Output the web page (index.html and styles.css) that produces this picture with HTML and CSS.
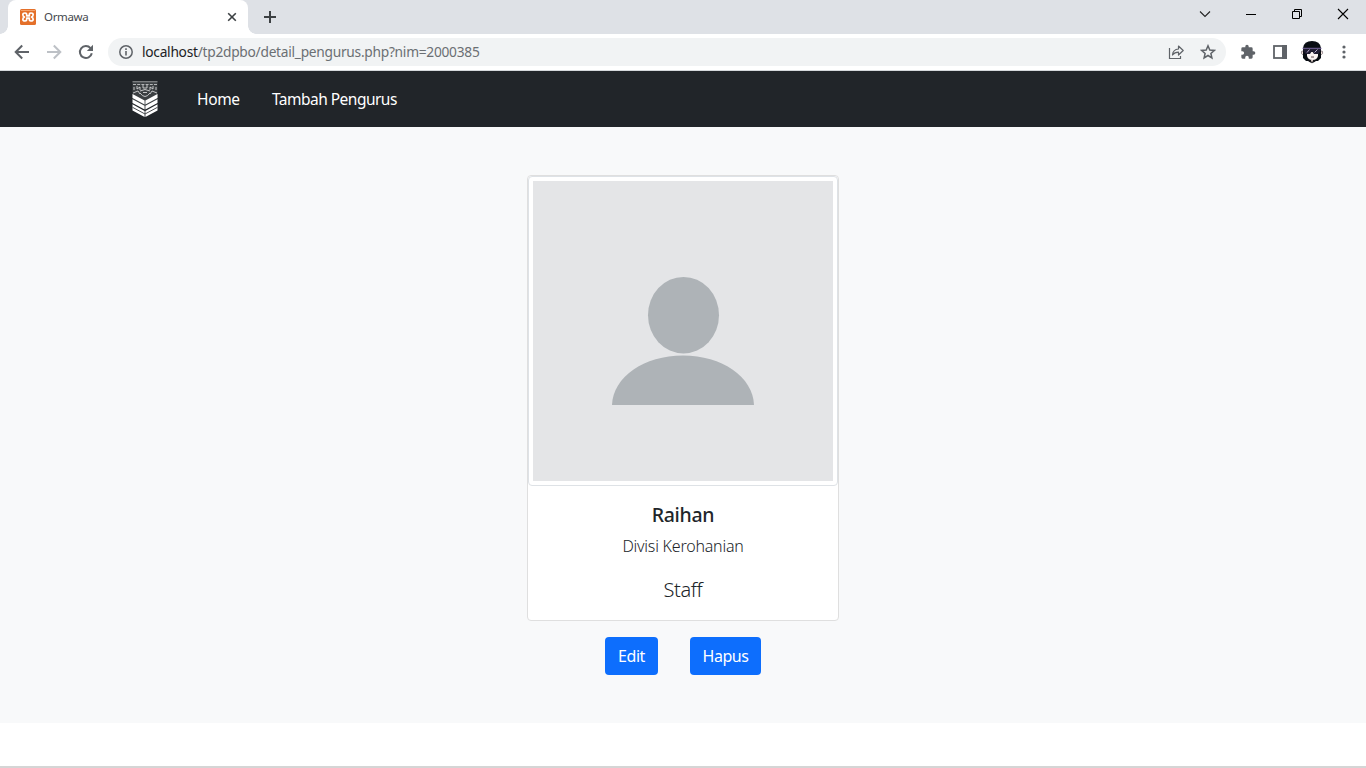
FILE: index.html
```
<!DOCTYPE html>
<html lang="id">
<head>
<meta charset="utf-8">
<title>Ormawa</title>
<link rel="stylesheet" href="styles.css">
</head>
<body>
<div class="window">
  <header class="tabstrip">
    <div class="tab">
      <svg class="favicon" width="16" height="16" viewBox="0 0 16 16"><rect width="16" height="16" rx="1.500" fill="#e4702a"/><path d="M1 1.500H15" stroke="#f5a36c"/><path d="M5 4C2.200 4 2.200 7 4.500 8C2.200 9 2.200 12 5 12C7 12 6.700 10 6.700 9.200H9.300C9.300 10 9 12 11 12C13.800 12 13.800 9 11.500 8C13.800 7 13.800 4 11 4C9 4 9.300 6 9.300 6.800H6.700C6.700 6 7 4 5 4Z" fill="none" stroke="#fff" stroke-width="1.700" stroke-linejoin="round"/></svg>
      <span class="tab-title">Ormawa</span>
      <svg class="tab-close" width="10" height="10" viewBox="0 0 10 10"><path d="M1.200 1.200L8.800 8.800M8.800 1.200L1.200 8.800" stroke="#3c4043" stroke-width="1.600"/></svg>
      <i class="tab-curve-left"></i><i class="tab-curve"></i>
    </div>
    <svg class="new-tab" width="14" height="14" viewBox="0 0 14 14"><path d="M7 1V13M1 7H13" stroke="#3c4043" stroke-width="2"/></svg>
    <div class="window-controls">
      <svg width="12" height="12" viewBox="0 0 12 12"><path d="M1 3.500L6 8.500L11 3.500" fill="none" stroke="#222" stroke-width="1.100"/></svg>
      <svg width="12" height="12" viewBox="0 0 12 12"><path d="M1 6.500H11" stroke="#000"/></svg>
      <svg width="12" height="12" viewBox="0 0 12 12"><path d="M1.500 3.500H8.500V10.500H1.500ZM3.500 3.500V1.500H10.500V8.500H8.500" fill="none" stroke="#000"/></svg>
      <svg width="12" height="12" viewBox="0 0 12 12"><path d="M1 1L11 11M11 1L1 11" stroke="#000" stroke-width="1.100"/></svg>
    </div>
  </header>

  <div class="toolbar">
    <div class="nav-buttons">
      <svg width="16" height="16" viewBox="0 0 16 16"><path d="M15 8H2M8.200 1.500L1.700 8L8.200 14.500" fill="none" stroke="#5f6368" stroke-width="2"/></svg>
      <svg width="16" height="16" viewBox="0 0 16 16"><path d="M1 8H14M7.800 1.500L14.300 8L7.800 14.500" fill="none" stroke="#bdc1c6" stroke-width="2"/></svg>
      <svg width="16" height="16" viewBox="0 0 16 16"><path d="M13.800 9.300A6 6 0 1 1 12.500 4.100" fill="none" stroke="#5f6368" stroke-width="2"/><path d="M15 .8V7H8.800Z" fill="#5f6368"/></svg>
    </div>
    <div class="address">
      <svg width="14" height="14" viewBox="0 0 14 14"><circle cx="7" cy="7" r="6.200" fill="none" stroke="#5f6368" stroke-width="1.500"/><path d="M7 6V10.600M7 3.300V4.900" stroke="#5f6368" stroke-width="1.600"/></svg>
      <span class="url"><b>localhost</b>/tp2dpbo/detail_pengurus.php?nim=2000385</span>
      <svg class="share" width="16" height="16" viewBox="0 0 16 16"><path d="M1.500 4V14.500H12.500V12" fill="none" stroke="#5f6368" stroke-width="1.200"/><path d="M4.500 11C4.800 7.300 6.800 5.300 10.500 5V2L15.200 6.500L10.500 11V8.200C7.500 8.200 6 9 4.500 11Z" fill="none" stroke="#5f6368" stroke-width="1.200" stroke-linejoin="round"/></svg>
      <svg class="star" width="16" height="16" viewBox="0 0 16 16"><path d="M8 1.800L9.800 6L14.300 6.400L10.900 9.400L11.900 13.900L8 11.500L4.100 13.900L5.100 9.400L1.700 6.400L6.200 6Z" fill="none" stroke="#5f6368" stroke-width="1.500"/></svg>
    </div>
    <div class="extensions">
      <svg width="16" height="16" viewBox="0 0 24 24"><path d="M20.500 11H19V7a2 2 0 0 0-2-2h-4V3.500a2.500 2.500 0 0 0-5 0V5H4a2 2 0 0 0-2 2v3.800h1.500a2.700 2.700 0 0 1 0 5.400H2V20a2 2 0 0 0 2 2h3.800v-1.500a2.700 2.700 0 0 1 5.400 0V22H17a2 2 0 0 0 2-2v-4h1.500a2.500 2.500 0 0 0 0-5Z" fill="#5f6368"/></svg>
      <svg class="side-panel" width="14" height="14" viewBox="0 0 14 14"><rect x="1" y="1" width="12" height="12" fill="none" stroke="#5f6368" stroke-width="1.800"/><path d="M9 0H14V14H9Z" fill="#5f6368"/></svg>
      <svg class="profile" width="24" height="24" viewBox="0 0 24 24"><path d="M3 11Q.8 10.500 1.400 13.500L4 16M21 11Q23.200 10.500 22.600 13.500L20 16" fill="#f2e3df" stroke="#756b72" stroke-width=".7"/><path d="M3 15V8Q4 1 12 1Q20 1 21 8V18L18 21H6L3 18Z" fill="#090d12"/><path d="M7 12H18V16Q17 20 12.500 20Q8 20 7 16Z" fill="#faf3f2"/><path d="M3 8H21V10L18.500 14H14L12 11L10 14H5.500L3 10Z" fill="#201d32"/><path d="M2.500 8.300H21.500" stroke="#756399"/><path d="M7 12.500L9.500 9.500M14.500 12.500L17.500 9.500" stroke="#b7a9ca"/><path d="M11 17H14" stroke="#3b252b" stroke-width=".8"/><path d="M8.500 20H15.500V21.500L12 23.200L8.500 21.500Z" fill="#15151a"/><path d="M11 20H13L12 23Z" fill="#f1dfd9"/></svg>
      <svg class="menu" width="4" height="14" viewBox="0 0 4 14"><g fill="#5f6368"><circle cx="2" cy="2" r="1.600"/><circle cx="2" cy="7" r="1.600"/><circle cx="2" cy="12" r="1.600"/></g></svg>
    </div>
  </div>

  <nav class="navbar">
    <svg class="brand" width="28" height="38" viewBox="0 0 28 38">
      <path d="M1.500 3H26.500V20L14 26L1.500 20Z" fill="#3c4043"/>
      <path d="M1.500 1.800H26.500" stroke="#85888a" stroke-width="1.400"/>
      <path d="M2 4.500H26" stroke="#b4b6b8" stroke-dasharray="3 1.200"/>
      <path d="M3 7V10M6 6V9L9 7V10M12 5V8H16V5M19 10V7L22 9V6M25 7V10M2 13L7 11L9 14M26 13L21 11L19 14M9 11Q14 8 19 11M9 13Q14 20 19 13M12 12.500H16" fill="none" stroke="#d2d4d5" stroke-width=".9"/>
      <path d="M1.500 14L13.600 20.500V24.500L1.500 18ZM26.500 14L14.400 20.500V24.500L26.500 18ZM1.500 19.300L13.600 25.800V29.600L1.500 23ZM26.500 19.300L14.400 25.800V29.600L26.500 23ZM1.500 24.300L13.600 30.900V37L1.500 30.500ZM26.500 24.300L14.400 30.900V37L26.500 30.500Z" fill="#fff"/>
      <path d="M1.500 27.300L14 34L26.500 27.300" fill="none" stroke="#34383b" stroke-width=".9"/>
    </svg>
    <a class="link-home">Home</a>
    <a class="link-add">Tambah Pengurus</a>
  </nav>

  <main class="page">
    <article class="card">
      <div class="thumbnail">
        <svg width="300" height="300" viewBox="0 0 300 300"><rect width="300" height="300" fill="#e4e5e7"/><ellipse cx="150.500" cy="134.200" rx="35.500" ry="38.300" fill="#aeb3b7"/><path d="M79 224C80 196 111 174.500 150 174.500S220 196 221 224Z" fill="#aeb3b7"/></svg>
      </div>
      <div class="card-body">
        <h5>Raihan</h5>
        <p class="division">Divisi Kerohanian</p>
        <p class="role">Staff</p>
      </div>
    </article>
    <div class="actions">
      <a class="button edit">Edit</a>
      <a class="button delete">Hapus</a>
    </div>
  </main>
  <div class="bottom-edge"></div>
</div>
</body>
</html>
```
FILE: styles.css
```
* { box-sizing: border-box; }
body { margin: 0; background: #fff; color: #212529; font-family: "Noto Sans", "Open Sans", sans-serif; }
svg { display: block; flex: none; }
.window { width: 1366px; height: 768px; display: flex; flex-direction: column; overflow: hidden; }
.tabstrip { height: 34px; flex: none; display: flex; background: #dee1e6; }
.tab { position: relative; width: 240px; height: 34px; margin-left: 8px; padding: 0 11px 0 12px; display: flex; align-items: center; background: #fff; border-radius: 8px 8px 0 0; }
.tab-title { flex: 1; margin-left: 8px; font-size: 11.5px; line-height: 16px; letter-spacing: -0.35px; color: #45484d; }
.tab-curve, .tab-curve-left { position: absolute; bottom: 0; width: 8px; height: 8px; }
.tab-curve { left: 100%; background: radial-gradient(circle at 100% 0, #dee1e6 7.500px, #fff 8px); }
.tab-curve-left { right: 100%; background: radial-gradient(circle at 0 0, #dee1e6 7.500px, #fff 8px); }
.new-tab { margin: 10px 0 0 15px; }
.window-controls { margin: 8px 17px 0 auto; display: flex; gap: 34px; }
.toolbar { height: 37px; flex: none; display: flex; align-items: center; background: #fff; border-bottom: 1px solid #d5d8db; }
.nav-buttons { width: 108px; padding-left: 14px; display: flex; gap: 16px; }
.address { width: 1118px; height: 28px; padding: 0 10px 0 11px; border-radius: 14px; display: flex; align-items: center; background: #f1f3f4; }
.url { margin-left: 9px; font-size: 13.75px; line-height: 20px; letter-spacing: -0.27px; color: #6b6f73; white-space: nowrap; }
.url b { font-weight: 400; color: #202124; }
.share { margin-left: auto; }
.star { margin-left: 16px; }
.extensions { flex: 1; padding-left: 14px; display: flex; align-items: center; }
.side-panel { margin-left: 17px; }
.profile { margin-left: 13px; }
.menu { margin-left: 18px; }
.navbar { height: 56px; flex: none; padding-left: 131px; display: flex; align-items: center; background: #212529; color: #fff; font-size: 15.5px; line-height: 24px; }
.link-home { margin-left: 38px; width: 43px; white-space: nowrap; letter-spacing: -0.35px; }
.link-add { margin-left: 32px; letter-spacing: -0.52px; }
.page { height: 596px; flex: none; padding-top: 48px; background: #f8f9fa; display: flex; flex-direction: column; align-items: center; }
.card { width: 312px; height: 446px; border: 1px solid #dfdfdf; border-radius: 4px; background: #fff; }
.thumbnail { width: 310px; height: 310px; padding: 4px; border: 1px solid #dee2e6; border-radius: 4px; }
.card-body { padding: 17px 16px 15px; text-align: center; }
h5, p { margin: 0; }
h5 { font-size: 19.5px; line-height: 24px; font-weight: 500; margin-bottom: 7px; letter-spacing: -0.3px; }
.division { font-size: 16px; line-height: 24px; font-weight: 300; margin-bottom: 17px; letter-spacing: -0.22px; }
.role { font-size: 20px; line-height: 30px; font-weight: 300; letter-spacing: -0.4px; }
.actions { margin-top: 16px; display: flex; gap: 32px; }
.button { height: 38px; border-radius: 4px; background: #0d6efd; color: #fff; font-size: 16px; line-height: 38px; text-align: center; letter-spacing: -0.45px; }
.edit { width: 53px; }
.delete { width: 71px; }
.bottom-edge { margin-top: auto; height: 2px; flex: none; background: #d5d5d5; }
```
